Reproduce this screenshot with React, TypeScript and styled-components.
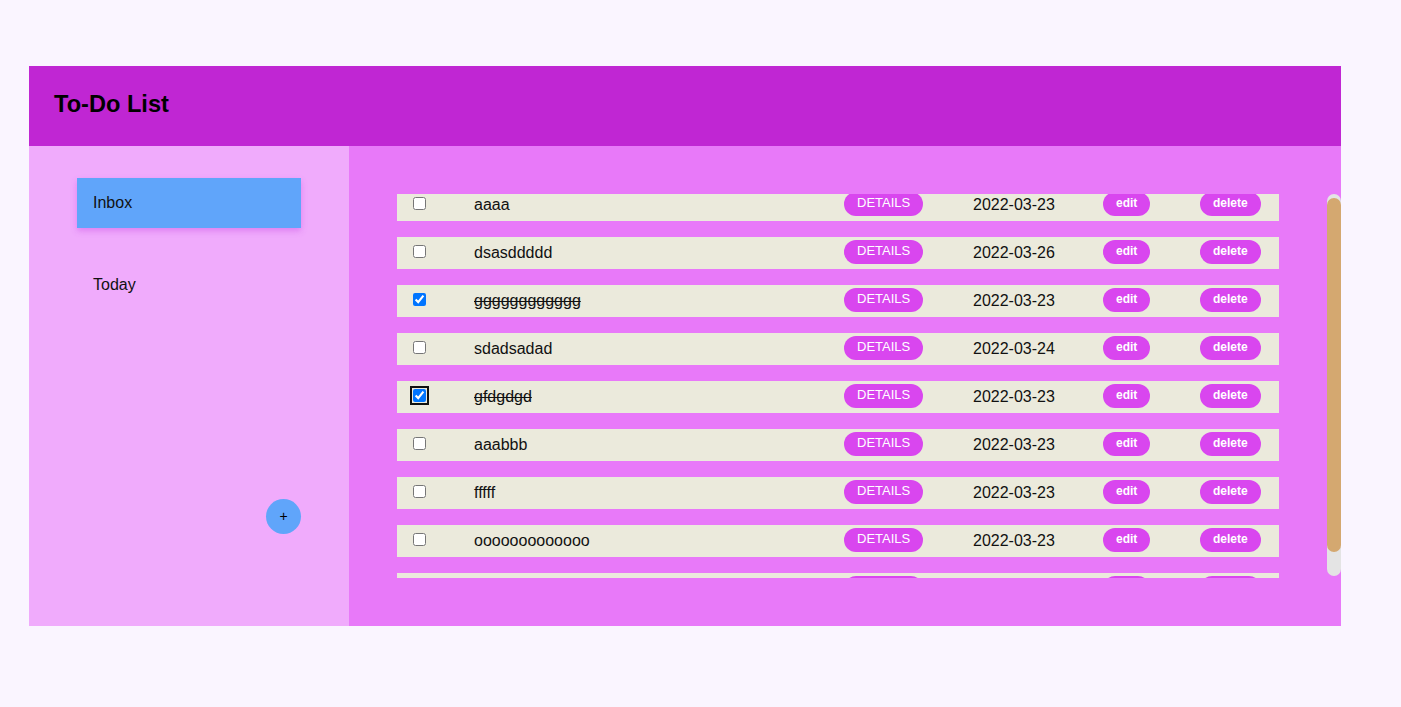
import React, { useEffect, useRef } from "react";
import styled, { createGlobalStyle } from "styled-components";

const GlobalStyle = createGlobalStyle`
  html, body {
    margin: 0;
    padding: 0;
    background: #faf5ff;
    font-family: "Liberation Sans", Arial, sans-serif;
  }
  * { box-sizing: border-box; }
`;

const Shell = styled.div`
  width: 1312px;
  margin: 66px 0 0 29px;
  display: flex;
  flex-direction: column;
`;

const Header = styled.header`
  height: 80px;
  background: #c026d3;
  display: flex;
  align-items: center;
  padding: 0 0 4px 25px;
`;

const Title = styled.h1`
  margin: 0;
  font-size: 23.6px;
  font-weight: 700;
  color: #000;
`;

const Body = styled.div`
  display: flex;
  height: 480px;
`;

const Sidebar = styled.nav`
  width: 320px;
  flex: none;
  background: #f0abfc;
  padding: 32px 48px 92px 48px;
  display: flex;
  flex-direction: column;
  gap: 32px;
`;

const NavItem = styled.div<{ $active?: boolean }>`
  height: 50px;
  display: flex;
  align-items: center;
  padding-left: 16px;
  font-size: 16px;
  color: #111;
  background: ${(p) => (p.$active ? "#60a5fa" : "transparent")};
  box-shadow: ${(p) => (p.$active ? "0 3px 6px rgba(200, 80, 230, 0.45)" : "none")};
`;

const AddButton = styled.button`
  margin-top: auto;
  align-self: flex-end;
  width: 35px;
  height: 35px;
  border-radius: 50%;
  border: none;
  background: #60a5fa;
  color: #000;
  font-size: 14px;
  font-family: "Liberation Sans", Arial, sans-serif;
  display: flex;
  align-items: center;
  justify-content: center;
  padding: 0 0 2px 0;
`;

const Main = styled.main`
  flex: 1;
  background: #e879f9;
  padding: 48px 0 48px 48px;
`;

const ListFrame = styled.div`
  height: 384px;
  display: flex;
  align-items: flex-start;
`;

const List = styled.div`
  flex: 1;
  height: 384px;
  overflow: hidden;
  display: flex;
  flex-direction: column;
  gap: 16px;
`;

const ScrollTrack = styled.div`
  flex: none;
  width: 14px;
  height: 382px;
  border-radius: 7px;
  background: #e4e4e4;
  display: flex;
  flex-direction: column;
  padding-top: 4px;
`;

const ScrollThumb = styled.div`
  height: 354px;
  border-radius: 7px;
  background: #d4a870;
`;

const Row = styled.div`
  flex: none;
  height: 32px;
  margin-right: 48px;
  background: #ebeadc;
  display: grid;
  grid-template-columns: 61px 370px 129px 130px 97px auto;
  align-items: center;
  padding-left: 16px;
  font-size: 16px;
  color: #111;
`;

const Check = styled.input<{ $focused?: boolean }>`
  margin: 0 0 3px 0;
  width: 13px;
  height: 13px;
  ${(p) =>
    p.$focused
      ? `outline: 2px solid #101010; outline-offset: 1px; border-radius: 2px;`
      : ""}
`;

const TaskName = styled.span<{ $done?: boolean }>`
  text-decoration: ${(p) => (p.$done ? "line-through" : "none")};
  white-space: nowrap;
`;

const Pill = styled.button<{ $bold?: boolean }>`
  justify-self: start;
  height: 24px;
  padding: 0 13px 2px 13px;
  border: none;
  border-radius: 12px;
  background: #d946ef;
  color: #fff;
  font-family: "Liberation Sans", Arial, sans-serif;
  font-size: ${(p) => (p.$bold ? "12px" : "13px")};
  font-weight: ${(p) => (p.$bold ? 700 : 400)};
  line-height: 22px;
  margin-bottom: 2px;
`;

const DateText = styled.span`
  white-space: nowrap;
`;

type Task = { name: string; date: string; done?: boolean; focused?: boolean };

const tasks: Task[] = [
  { name: "aaaa", date: "2022-03-23" },
  { name: "dsasddddd", date: "2022-03-26" },
  { name: "gggggggggggg", date: "2022-03-23", done: true },
  { name: "sdadsadad", date: "2022-03-24" },
  { name: "gfdgdgd", date: "2022-03-23", done: true, focused: true },
  { name: "aaabbb", date: "2022-03-23" },
  { name: "fffff", date: "2022-03-23" },
  { name: "ooooooooooooo", date: "2022-03-23" },
  { name: "hhhhh", date: "2022-03-25" },
];

export default function App() {
  const listRef = useRef<HTMLDivElement>(null);
  useEffect(() => {
    if (listRef.current) listRef.current.scrollTop = 5;
  }, []);

  return (
    <>
      <GlobalStyle />
      <Shell>
        <Header>
          <Title>To-Do List</Title>
        </Header>
        <Body>
          <Sidebar>
            <NavItem $active>Inbox</NavItem>
            <NavItem>Today</NavItem>
            <AddButton>+</AddButton>
          </Sidebar>
          <Main>
            <ListFrame>
              <List ref={listRef}>
                {tasks.map((t, i) => (
                  <Row key={i}>
                    <Check
                      type="checkbox"
                      defaultChecked={!!t.done}
                      $focused={t.focused}
                    />
                    <TaskName $done={t.done}>{t.name}</TaskName>
                    <Pill>DETAILS</Pill>
                    <DateText>{t.date}</DateText>
                    <Pill $bold>edit</Pill>
                    <Pill $bold>delete</Pill>
                  </Row>
                ))}
              </List>
              <ScrollTrack>
                <ScrollThumb />
              </ScrollTrack>
            </ListFrame>
          </Main>
        </Body>
      </Shell>
    </>
  );
}
